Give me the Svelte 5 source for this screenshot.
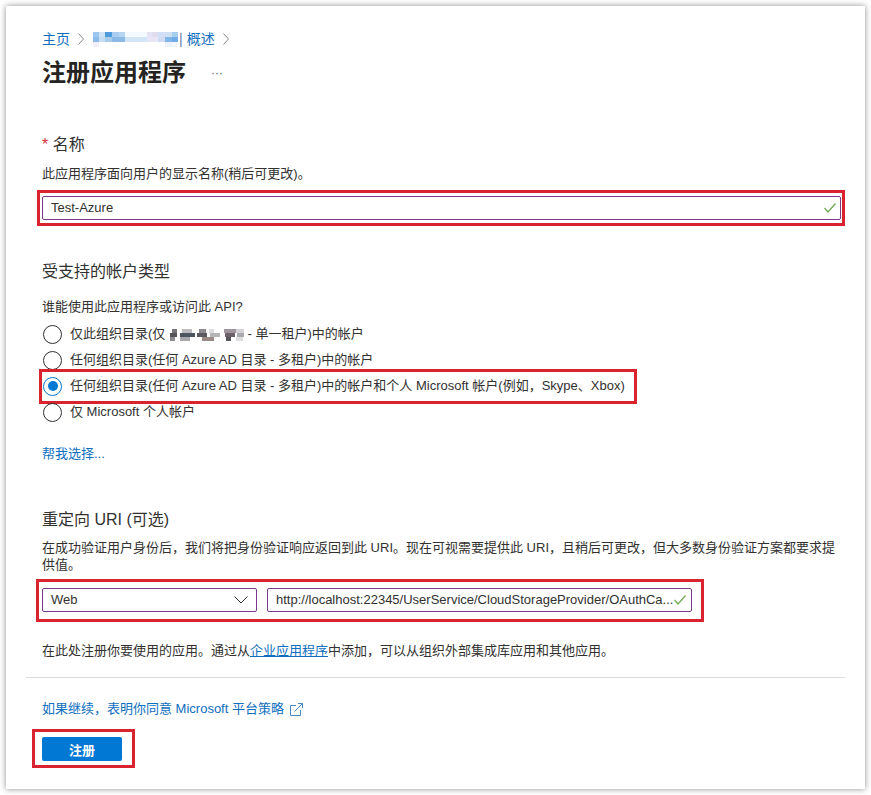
<script>
  // pixelated redactions, each row is a list of [colour, width in px]
  const crumbBlur = [
    [['#9cc6ee', 6], ['#cfe2f6', 6], ['#4f9bdc', 7], ['#a9cdf1', 7], ['#b5d5f3', 6], ['#f4f9fd', 22], ['#e3e3f4', 5], ['#e2dcf0', 6], ['#d3ddf3', 7], ['#cfe0f5', 7], ['#a8cff0', 6]],
    [['#8abbe9', 6], ['#c5dcf3', 6], ['#a8cceb', 7], ['#8db9e6', 13], ['#d3e6f7', 22], ['#e7e5f6', 11], ['#cfdcf3', 7], ['#80b5e8', 7], ['#72ace6', 6]],
    [['#f4eef7', 6], ['#fff', 66], ['#eef2fb', 7], ['#f3f6fb', 6]]
  ]
  const tenantBlur = [
    [['#fff', 3], ['#77747a', 5], ['#fff', 5], ['#bdbbc0', 10], ['#fff', 7], ['#8c8a90', 7], ['#fff', 3], ['#dcdcde', 5], ['#fff', 10], ['#a0959c', 12], ['#d4d2d6', 8]],
    [['#fff', 1], ['#55555a', 7], ['#fff', 3], ['#4d5560', 15], ['#fff', 2], ['#5a5a60', 10], ['#fff', 3], ['#b5b5b8', 10], ['#fff', 5], ['#6d6068', 10], ['#fff', 2], ['#aaaaae', 7]],
    [['#fff', 1], ['#8c8c90', 5], ['#fff', 5], ['#a8a8ac', 10], ['#fff', 12], ['#9a8a85', 12], ['#fff', 12], ['#55555a', 5], ['#fff', 5], ['#dddde0', 7]]
  ]
  const accounts = [
    { id: 'single' },
    { id: 'multi', text: '任何组织目录(任何 Azure AD 目录 - 多租户)中的帐户' },
    { id: 'personal', text: '任何组织目录(任何 Azure AD 目录 - 多租户)中的帐户和个人 Microsoft 帐户(例如，Skype、Xbox)', marked: true },
    { id: 'ms', text: '仅 Microsoft 个人帐户' }
  ]
  let account = $state('personal')
</script>

{#snippet check()}
  <svg class="check" width="12" height="10" viewBox="0 0 12 10"><path d="M0.5 5 L4 9 L11.5 0.5" /></svg>
{/snippet}

{#snippet pixels(rows, cls)}
  <span class="blur {cls}">
    {#each rows as row}
      <span class="blur-row">
        {#each row as [color, w]}<i style="background:{color};width:{w}px"></i>{/each}
      </span>
    {/each}
  </span>
{/snippet}

<div class="card">
  <nav class="crumbs">
    <a href="#home">主页</a>
    <svg class="chev" width="6" height="12" viewBox="0 0 6 12"><path d="M0.5 0.5 L5.5 6 L0.5 11.5" /></svg>
    {@render pixels(crumbBlur, 'crumb-blur')}
    <span class="bar">|</span>
    <a href="#overview">概述</a>
    <svg class="chev" width="6" height="12" viewBox="0 0 6 12"><path d="M0.5 0.5 L5.5 6 L0.5 11.5" /></svg>
  </nav>

  <header class="head">
    <h1>注册应用程序</h1>
    <span class="more">···</span>
  </header>

  <section class="name">
    <h2><span class="star">*</span> 名称</h2>
    <p class="hint">此应用程序面向用户的显示名称(稍后可更改)。</p>
    <div class="mark mark-name">
      <div class="field">
        <span class="value">Test-Azure</span>
        {@render check()}
      </div>
    </div>
  </section>

  <section class="types">
    <h2>受支持的帐户类型</h2>
    <p class="hint who">谁能使用此应用程序或访问此 API?</p>
    <div class="radios">
      {#each accounts as item}
        <label class="radio" class:marked={item.marked}>
          <input type="radio" name="account" value={item.id} bind:group={account} />
          <span class="dot"></span>
          {#if item.id === 'single'}
            <span class="single">仅此组织目录(仅 {@render pixels(tenantBlur, 'tenant-blur')} - 单一租户)中的帐户</span>
          {:else}
            <span>{item.text}</span>
          {/if}
        </label>
      {/each}
    </div>
    <a class="help" href="#help">帮我选择...</a>
  </section>

  <section class="redirect">
    <h2>重定向 URI (可选)</h2>
    <p class="hint desc">在成功验证用户身份后，我们将把身份验证响应返回到此 URI。现在可视需要提供此 URI，且稍后可更改，但大多数身份验证方案都要求提供值。</p>
    <div class="mark mark-uri">
      <div class="field select">
        <span class="value">Web</span>
        <svg class="caret" width="14" height="8" viewBox="0 0 14 8"><path d="M0.5 0.5 L7 7 L13.5 0.5" /></svg>
      </div>
      <div class="field uri">
        <span class="value">http://localhost:22345/UserService/CloudStorageProvider/OAuthCa...</span>
        {@render check()}
      </div>
    </div>
    <p class="hint note">在此处注册你要使用的应用。通过从<a href="#enterprise">企业应用程序</a>中添加，可以从组织外部集成库应用和其他应用。</p>
  </section>

  <hr />

  <a class="policy" href="#policy">
    如果继续，表明你同意 Microsoft 平台策略
    <svg width="13" height="13" viewBox="0 0 13 13"><path d="M6 2.5 H0.5 V12.5 H10.5 V7 M4.5 8.5 L12.5 0.5 M8 0.5 H12.5 V5" /></svg>
  </a>

  <div class="mark mark-submit">
    <button type="button">注册</button>
  </div>
</div>

<style>
  :global(body) {
    box-sizing: border-box;
    height: 795px;
    padding: 6px 6px 6px 6px;
    background: #fff;
    font-family: "Liberation Sans", "Noto Sans CJK SC", sans-serif;
    color: #323130;
  }

  .card {
    box-sizing: border-box;
    width: 859px;
    height: 783px;
    padding: 25px 20px 0 36px;
    background: #fff;
    box-shadow: 0 0 6px rgba(0, 0, 0, 0.45);
    font-size: 13px;
    line-height: 18px;
  }

  a {
    color: #106ebe;
    text-decoration: none;
  }

  h2 {
    margin: 0;
    font-size: 16px;
    font-weight: 400;
    line-height: 20px;
  }

  .crumbs {
    display: flex;
    align-items: center;
    height: 16px;
    font-size: 14px;
  }

  .chev {
    margin: 0 9px 0 8px;
    fill: none;
    stroke: #8a8886;
  }

  .blur {
    display: inline-flex;
    flex-direction: column;
    vertical-align: middle;
  }

  .blur-row {
    display: flex;
    flex: 1;
  }

  .blur i {
    display: block;
    flex: none;
  }

  .crumb-blur {
    height: 15px;
  }

  .tenant-blur {
    height: 12px;
  }

  .bar {
    margin: 0 4px 0 1px;
    color: #5b7fa6;
  }

  .head {
    display: flex;
    align-items: center;
    height: 34px;
    margin-top: 9px;
  }

  h1 {
    margin: 0;
    font-size: 24px;
    font-weight: 700;
    line-height: 34px;
    color: #252423;
  }

  .more {
    margin-left: 25px;
    font-size: 12px;
    color: #605e5c;
  }

  .name {
    margin-top: 45px;
  }

  .star {
    color: #d13438;
  }

  .hint {
    margin: 0;
  }

  .name .hint {
    margin-top: 10px;
  }

  .mark {
    border: 3px solid #d9232e;
    box-sizing: border-box;
  }

  .mark-name {
    width: 808px;
    height: 36px;
    margin: 7px 0 0 -5px;
    padding: 3px 1px 3px 2px;
  }

  .field {
    box-sizing: border-box;
    display: flex;
    align-items: center;
    justify-content: space-between;
    height: 24px;
    padding: 0 4px 0 8px;
    border: 1px solid #7a3b8f;
    border-radius: 2px;
    background: #fff;
  }

  .check {
    flex: none;
    fill: none;
    stroke: #6fa84f;
    stroke-width: 1.2;
  }

  .types {
    margin-top: 36px;
  }

  .who {
    margin-top: 16px;
  }

  .radios {
    display: flex;
    flex-direction: column;
    margin-top: 5px;
  }

  .radio {
    box-sizing: border-box;
    display: flex;
    align-items: center;
    height: 26px;
    padding-left: 1px;
    gap: 8px;
    position: relative;
  }

  .radio input {
    position: absolute;
    opacity: 0;
    margin: 0;
  }

  .radio.marked::after {
    content: "";
    position: absolute;
    left: -3px;
    top: -4px;
    width: 598px;
    height: 35px;
    box-sizing: border-box;
    border: 3px solid #d9232e;
    pointer-events: none;
  }

  .dot {
    flex: none;
    box-sizing: border-box;
    position: relative;
    width: 19px;
    height: 19px;
    border: 1.5px solid #323130;
    border-radius: 50%;
  }

  .radio input:checked + .dot {
    border-color: #0078d4;
    border-width: 1px;
  }

  .radio input:checked + .dot::after {
    content: "";
    position: absolute;
    inset: 3.5px;
    border-radius: 50%;
    background: #0078d4;
  }

  .help {
    display: block;
    margin-top: 20px;
  }

  .redirect {
    margin-top: 47px;
  }

  .desc {
    margin-top: 9px;
    line-height: 17px;
  }

  .mark-uri {
    display: flex;
    gap: 10px;
    width: 668px;
    height: 43px;
    margin: 6px 0 0 -6px;
    padding: 6px 9px 6px 3px;
  }

  .select {
    flex: 0 0 215px;
    padding-right: 8px;
  }

  .caret {
    fill: none;
    stroke: #323130;
  }

  .uri {
    flex: 1;
    min-width: 0;
    padding-right: 5px;
  }

  .note {
    margin-top: 20px;
  }

  .note a {
    text-decoration: underline;
  }

  hr {
    margin: 17px 0 0 -16px;
    width: 819px;
    border: 0;
    border-top: 1px solid #dcdcdc;
  }

  .policy {
    display: flex;
    align-items: center;
    gap: 6px;
    margin-top: 22px;
  }

  .policy svg {
    fill: none;
    stroke: #4a86c0;
  }

  .mark-submit {
    width: 103px;
    height: 39px;
    margin: 11px 0 0 -10px;
    padding: 5px 10px 0 7px;
  }

  button {
    display: block;
    width: 80px;
    height: 24px;
    padding: 0;
    border: 0;
    border-radius: 2px;
    background: #0078d4;
    color: #fff;
    font: 700 13px "Liberation Sans", "Noto Sans CJK SC", sans-serif;
  }
</style>
